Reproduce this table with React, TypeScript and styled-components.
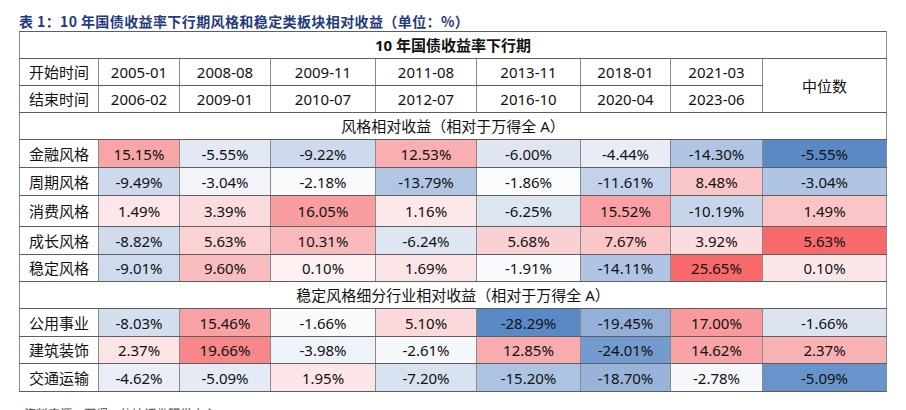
import React from 'react';
import styled, { createGlobalStyle } from 'styled-components';

type Cell = [string, string];

interface DataRow {
    name: string;
    height: number;
    cells: Cell[];
}

const periods = [
    ['2005-01', '2006-02'],
    ['2008-08', '2009-01'],
    ['2009-11', '2010-07'],
    ['2011-08', '2012-07'],
    ['2013-11', '2016-10'],
    ['2018-01', '2020-04'],
    ['2021-03', '2023-06'],
];

const colWidths = [79, 81, 91, 105, 101, 104, 90, 92, 124];

const styleRows: DataRow[] = [
    {
        name: '金融风格', height: 28, cells: [
            ['15.15%', '#F8A5A8'], ['-5.55%', '#E2E8F4'], ['-9.22%', '#CDD9EC'], ['12.53%', '#F9AFB1'],
            ['-6.00%', '#DFE6F2'], ['-4.44%', '#E7ECF6'], ['-14.30%', '#B0C5E3'], ['-5.55%', '#5B89C6'],
        ]
    },
    {
        name: '周期风格', height: 28, cells: [
            ['-9.49%', '#CDD9EC'], ['-3.04%', '#F3F5FA'], ['-2.18%', '#FAFAFD'], ['-13.79%', '#B1C6E3'],
            ['-1.86%', '#FAFBFD'], ['-11.61%', '#C2D2EA'], ['8.48%', '#F9C6C8'], ['-3.04%', '#B0C5E3'],
        ]
    },
    {
        name: '消费风格', height: 31, cells: [
            ['1.49%', '#FCE6E7'], ['3.39%', '#FBDCDE'], ['16.05%', '#F89EA1'], ['1.16%', '#FCE8E9'],
            ['-6.25%', '#DEE6F2'], ['15.52%', '#F9A1A4'], ['-10.19%', '#C7D5EB'], ['1.49%', '#F9C5C7'],
        ]
    },
    {
        name: '成长风格', height: 28, cells: [
            ['-8.82%', '#D0DCEE'], ['5.63%', '#FAD2D4'], ['10.31%', '#F9BABD'], ['-6.24%', '#DEE6F2'],
            ['5.68%', '#FAD1D3'], ['7.67%', '#FAC6C8'], ['3.92%', '#FBDDDF'], ['5.63%', '#F8696B'],
        ]
    },
    {
        name: '稳定风格', height: 27, cells: [
            ['-9.01%', '#CEDAED'], ['9.60%', '#F9BDBF'], ['0.10%', '#FDF0F1'], ['1.69%', '#FCE5E6'],
            ['-1.91%', '#F9FAFD'], ['-14.11%', '#B0C5E3'], ['25.65%', '#F8696B'], ['0.10%', '#FBE6E7'],
        ]
    },
];

const industryRows: DataRow[] = [
    {
        name: '公用事业', height: 28, cells: [
            ['-8.03%', '#D3DEEF'], ['15.46%', '#F9A2A5'], ['-1.66%', '#FAFAFD'], ['5.10%', '#FBD9DB'],
            ['-28.29%', '#5A8AC6'], ['-19.45%', '#94B0D9'], ['17.00%', '#F8999C'], ['-1.66%', '#DDE4F1'],
        ]
    },
    {
        name: '建筑装饰', height: 27, cells: [
            ['2.37%', '#FCE3E4'], ['19.66%', '#F8878A'], ['-3.98%', '#EEF2F9'], ['-2.61%', '#F5F7FB'],
            ['12.85%', '#F9ACAF'], ['-24.01%', '#729CCF'], ['14.62%', '#F9A3A6'], ['2.37%', '#F9B2B4'],
        ]
    },
    {
        name: '交通运输', height: 28, cells: [
            ['-4.62%', '#E8EDF6'], ['-5.09%', '#E5EBF5'], ['1.95%', '#FCE5E6'], ['-7.20%', '#D8E1F0'],
            ['-15.20%', '#ADC3E2'], ['-18.70%', '#99B4DA'], ['-2.78%', '#F5F7FB'], ['-5.09%', '#6894CB'],
        ]
    },
];

const GlobalStyle = createGlobalStyle`
  html, body {
    margin: 0;
    padding: 0;
    background: #ffffff;
  }
  body {
    font-family: "Noto Sans", "Noto Sans CJK SC", sans-serif;
    color: #111111;
  }
`;

const Page = styled.div`
  width: 906px;
  height: 410px;
  overflow: hidden;
  padding: 12px 0 0 19px;
  box-sizing: border-box;
`;

const Caption = styled.div`
  font-family: "Noto Sans CJK SC", sans-serif;
  font-size: 14px;
  font-weight: 700;
  letter-spacing: 0.4px;
  line-height: 18px;
  color: #1f3b7d;
  margin-bottom: 1px;
`;

const Table = styled.table`
  border-collapse: collapse;
  table-layout: fixed;
  width: 868px;
  font-size: 15px;
  border: 1px solid #6f6f6f;
`;

const Row = styled.tr<{ $h: number }>`
  height: ${props => props.$h}px;
`;

const Td = styled.td<{ $bg?: string }>`
  border: 1px solid #5e5e5e;
  border-left-color: #8a8a8a;
  border-right-color: #8a8a8a;
  padding: 0;
  text-align: center;
  vertical-align: middle;
  line-height: 18px;
  white-space: nowrap;
  background-color: ${props => props.$bg || '#ffffff'};
`;

const TitleCell = styled(Td)`
  font-weight: 700;
`;

const Source = styled.div`
  font-family: "Noto Sans CJK SC", sans-serif;
  font-size: 12px;
  font-style: italic;
  color: #4a4a4a;
  margin-top: 12px;
  padding-left: 3px;
`;

const DataRows: React.FC<{ rows: DataRow[] }> = ({ rows }) => (
    <>
        {rows.map(row => (
            <Row key={row.name} $h={row.height}>
                <Td>{row.name}</Td>
                {row.cells.map(([value, color], i) => (
                    <Td key={i} $bg={color}>{value}</Td>
                ))}
            </Row>
        ))}
    </>
);

const App: React.FC = () => {
    return (
        <Page>
            <GlobalStyle />
            <Caption>表 1：10 年国债收益率下行期风格和稳定类板块相对收益（单位：%）</Caption>
            <Table>
                <colgroup>
                    {colWidths.map((w, i) => <col key={i} style={{ width: w }} />)}
                </colgroup>
                <tbody>
                    <Row $h={27}>
                        <TitleCell colSpan={9}>10 年国债收益率下行期</TitleCell>
                    </Row>
                    <Row $h={27}>
                        <Td>开始时间</Td>
                        {periods.map(p => <Td key={p[0]}>{p[0]}</Td>)}
                        <Td rowSpan={2}>中位数</Td>
                    </Row>
                    <Row $h={27}>
                        <Td>结束时间</Td>
                        {periods.map(p => <Td key={p[1]}>{p[1]}</Td>)}
                    </Row>
                    <Row $h={27}>
                        <Td colSpan={9}>风格相对收益（相对于万得全 A）</Td>
                    </Row>
                    <DataRows rows={styleRows} />
                    <Row $h={27}>
                        <Td colSpan={9}>稳定风格细分行业相对收益（相对于万得全 A）</Td>
                    </Row>
                    <DataRows rows={industryRows} />
                </tbody>
            </Table>
            <Source>资料来源：万得，信达证券研发中心</Source>
        </Page>
    );
};

export default App;
